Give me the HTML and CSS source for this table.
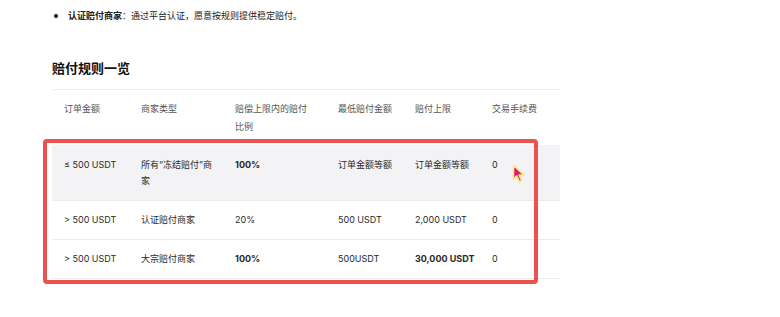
FILE: index.html
```html
<!DOCTYPE html>
<html lang="zh-CN">
<head>
<meta charset="utf-8">
<link rel="stylesheet" href="styles.css">
</head>
<body>
<div class="page">
  <ul class="bullets">
    <li><span class="strong">认证赔付商家</span>：通过平台认证，愿意按规则提供稳定赔付。</li>
  </ul>
  <h2 class="title">赔付规则一览</h2>
  <div class="table-wrap">
    <table class="rules">
      <colgroup>
        <col class="c1"><col class="c2"><col class="c3"><col class="c4"><col class="c5"><col class="c6">
      </colgroup>
      <thead>
        <tr>
          <th>订单金额</th>
          <th>商家类型</th>
          <th><span class="narrow">赔偿上限内的赔付比例</span></th>
          <th>最低赔付金额</th>
          <th>赔付上限</th>
          <th>交易手续费</th>
        </tr>
      </thead>
      <tbody>
        <tr class="hl">
          <td>≤ 500 USDT</td>
          <td>所有“冻结赔付”商家</td>
          <td class="b">100%</td>
          <td>订单金额等额</td>
          <td>订单金额等额</td>
          <td>0</td>
        </tr>
        <tr>
          <td>&gt; 500 USDT</td>
          <td>认证赔付商家</td>
          <td>20%</td>
          <td>500 USDT</td>
          <td>2,000 USDT</td>
          <td>0</td>
        </tr>
        <tr>
          <td>&gt; 500 USDT</td>
          <td>大宗赔付商家</td>
          <td class="b">100%</td>
          <td>500USDT</td>
          <td class="b">30,000 USDT</td>
          <td>0</td>
        </tr>
      </tbody>
    </table>
    <div class="annot"></div>
    <svg class="cursor" width="14" height="20" viewBox="0 0 14 20">
      <path d="M1.5 1.5 L1.5 15 L4.8 11.8 L7.4 17.6 L9.6 16.6 L7.1 11 L11.8 11 Z" fill="#e3166e" stroke="#f5e77a" stroke-width="1.6" stroke-linejoin="round"/>
    </svg>
  </div>
</div>
</body>
</html>
```

FILE: styles.css
```css
* { box-sizing: border-box; }
html, body { margin: 0; padding: 0; background: #fff; }
body {
  font-family: Inter, "Noto Sans CJK SC", sans-serif;
  color: #222;
  width: 780px;
  height: 317px;
  overflow: hidden;
}
.page {
  padding-left: 52px;
  width: 560px;
}
.bullets {
  list-style: none;
  margin: 8px 0 0 0;
  padding: 0;
  font-size: 9px;
  line-height: 16px;
}
.bullets li {
  position: relative;
  padding-left: 16px;
}
.bullets li::before {
  content: "";
  position: absolute;
  left: 2px;
  top: 6px;
  width: 4px;
  height: 4px;
  border-radius: 50%;
  background: #111;
}
.strong { font-weight: 700; }
.title {
  margin: 35px 0 0 0;
  font-size: 13px;
  line-height: 18px;
  font-weight: 700;
  color: #111;
}
.table-wrap {
  position: relative;
  margin-top: 12px;
}
.rules {
  width: 508px;
  table-layout: fixed;
  border-collapse: collapse;
  font-size: 9px;
}
.c1 { width: 77px; }
.c2 { width: 94px; }
.c3 { width: 103px; }
.c4 { width: 77px; }
.c5 { width: 77px; }
.c6 { width: 80px; }
.rules th {
  text-align: left;
  font-weight: 400;
  color: #555;
  line-height: 18px;
  padding: 10px 4px 9px 12px;
  vertical-align: top;
  border-top: 1px solid #ececec;
}
.narrow { display: block; max-width: 76px; }
.rules td {
  line-height: 16px;
  padding: 11px 4px 11px 12px;
  vertical-align: top;
  border-top: 1px solid #ececec;
  color: #2a2a2a;
}
.rules tbody tr:last-child td { border-bottom: 1px solid #ececec; }
.rules tr.hl td { background: #f3f2f5; border-top-color: #f3f2f5; }
.rules td.b { font-weight: 700; }
.annot {
  position: absolute;
  left: -9px;
  top: 50px;
  width: 495px;
  height: 145px;
  border: 4px solid #e8524f;
  border-radius: 4px;
}
.cursor {
  position: absolute;
  left: 460px;
  top: 75px;
}
```
